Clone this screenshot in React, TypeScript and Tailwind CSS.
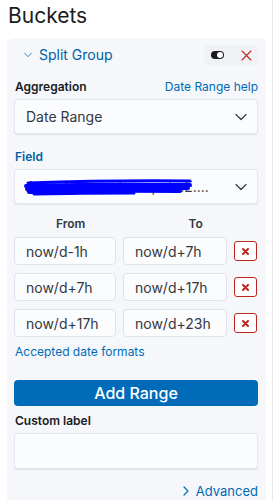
const ranges = [
  { from: "now/d-1h", to: "now/d+7h" },
  { from: "now/d+7h", to: "now/d+17h" },
  { from: "now/d+17h", to: "now/d+23h" },
]

function Chevron({ className }: { className?: string }) {
  return (
    <svg className={className} width="12" height="8" viewBox="0 0 12 8" fill="none">
      <path d="M1 1.5l5 5 5-5" stroke="currentColor" strokeWidth="1.2" strokeLinecap="round" strokeLinejoin="round" />
    </svg>
  )
}

function SelectBox({ children }: { children: React.ReactNode }) {
  return (
    <div className="relative flex h-[35px] items-center justify-between rounded-[3px] border border-[#e3e6ec] bg-[#fbfcfd] pl-[11px] pr-[10px] shadow-[0_1px_1px_rgba(0,0,0,0.08)]">
      {children}
      <Chevron className="text-[#343741]" />
    </div>
  )
}

export default function App() {
  return (
    <div className="h-[500px] w-[274px] overflow-hidden bg-white font-['Inter',sans-serif]">
      <div className="h-full w-[273px] border-r border-[#e4e8ee] px-[7px]">
        <h2 className="pl-[1px] pt-[2px] text-[21px] leading-[28px] text-[#1a1c21]">Buckets</h2>

        <div className="mt-[8px] h-[470px] w-[259px] rounded-[6px] bg-[#f5f7fa] pl-[7px] pr-[8px] pt-[7px]">
          {/* header */}
          <div className="flex h-[20px] items-center">
            <Chevron className="ml-[10px] h-[6px] w-[8px] text-[#006bb8]" />
            <span className="ml-[7px] text-[14px] leading-[20px] text-[#0061a6]">Split Group</span>
            <div className="ml-auto flex h-[20px] w-[54px] items-center rounded-[3px] bg-[#f0f2f6] pl-[7px]">
              <svg width="13" height="8" viewBox="0 0 13 8">
                <rect x="0" y="0" width="13" height="8" rx="4" fill="#1a1c21" />
                <circle cx="9" cy="4" r="3" fill="#fff" />
              </svg>
              <svg className="ml-[17px]" width="11" height="11" viewBox="0 0 11 11">
                <path d="M1 1l9 9M10 1l-9 9" stroke="#bd271e" strokeWidth="1.1" strokeLinecap="round" />
              </svg>
            </div>
          </div>

          {/* aggregation */}
          <div className="mt-[15px] flex h-[14px] items-center justify-between">
            <span className="pl-[1px] text-[12px] font-semibold leading-[14px] text-[#1a1c21]">Aggregation</span>
            <span className="text-[12px] leading-[14px] text-[#006bb8]">Date Range help</span>
          </div>
          <div className="mt-[5px]">
            <SelectBox>
              <span className="text-[14px] text-[#343741]">Date Range</span>
            </SelectBox>
          </div>

          {/* field */}
          <div className="mt-[16px] h-[14px] pl-[1px] text-[12px] font-semibold leading-[14px] text-[#0061a6]">Field</div>
          <div className="mt-[5px]">
            <SelectBox>
              <div className="relative w-[180px] whitespace-nowrap text-[14px] leading-[20px] text-[#343741]">
                Adsfghjklzxcvbnm.poiu.E....
                <svg className="absolute left-[-2px] top-[0px] h-[20px] w-[170px] max-w-none" width="170" height="20" viewBox="0 0 170 20" fill="none">
                  <path d="M4 6Q90 3 166 4" stroke="#0000ff" strokeWidth="3" strokeLinecap="round" />
                  <path d="M2 9Q80 7 166 8" stroke="#0000ff" strokeWidth="4" strokeLinecap="round" />
                  <path d="M3 12Q90 10 164 11" stroke="#0000ff" strokeWidth="4" strokeLinecap="round" />
                  <path d="M5 15Q80 13 156 14" stroke="#0000ff" strokeWidth="4" strokeLinecap="round" />
                  <path d="M10 17Q60 16 110 16" stroke="#0000ff" strokeWidth="3" strokeLinecap="round" />
                </svg>
              </div>
            </SelectBox>
          </div>

          {/* ranges */}
          <div className="mt-[13px] flex h-[14px] text-[12px] font-semibold leading-[14px] text-[#343741]">
            <span className="ml-[42px]">From</span>
            <span className="ml-[103px]">To</span>
          </div>
          <div className="mt-[6px] flex flex-col gap-[8px]">
            {ranges.map((r) => (
              <div key={r.from} className="flex items-center gap-[7px]">
                <div className="flex h-[28px] w-[102px] items-center rounded-[4px] border border-[#dfe3e9] bg-[#fbfcfd] pl-[11px] text-[14px] text-[#343741]">
                  {r.from}
                </div>
                <div className="flex h-[28px] w-[104px] items-center rounded-[4px] border border-[#dfe3e9] bg-[#fbfcfd] pl-[11px] text-[14px] text-[#343741]">
                  {r.to}
                </div>
                <div className="flex h-[20px] w-[23px] items-center justify-center rounded-[3px] border border-[#bd271e] bg-white">
                  <svg width="7" height="7" viewBox="0 0 7 7">
                    <path d="M1 1l5 5M6 1l-5 5" stroke="#bd271e" strokeWidth="2" strokeLinecap="round" />
                  </svg>
                </div>
              </div>
            ))}
          </div>
          <div className="mt-[8px] h-[14px] pl-[1px] text-[12px] leading-[14px] text-[#006bb8]">Accepted date formats</div>

          <button className="mt-[21px] flex h-[26px] w-full items-center justify-center rounded-[4px] bg-[#006bb8] text-[16px] font-medium text-white">
            Add Range
          </button>

          {/* custom label */}
          <div className="mt-[8px] h-[14px] pl-[1px] text-[12px] font-semibold leading-[14px] text-[#1a1c21]">Custom label</div>
          <div className="mt-[5px] h-[36px] rounded-[3px] border border-[#e3e6ec] bg-[#fbfcfd] shadow-[0_1px_1px_rgba(0,0,0,0.08)]" />

          <div className="mt-[15px] flex h-[14px] items-center justify-end text-[13px] leading-[14px] text-[#006bb8]">
            <svg className="mr-[7px]" width="6" height="10" viewBox="0 0 6 10" fill="none">
              <path d="M1 1l4 4-4 4" stroke="currentColor" strokeWidth="1.2" strokeLinecap="round" strokeLinejoin="round" />
            </svg>
            Advanced
          </div>
        </div>
      </div>
    </div>
  )
}
